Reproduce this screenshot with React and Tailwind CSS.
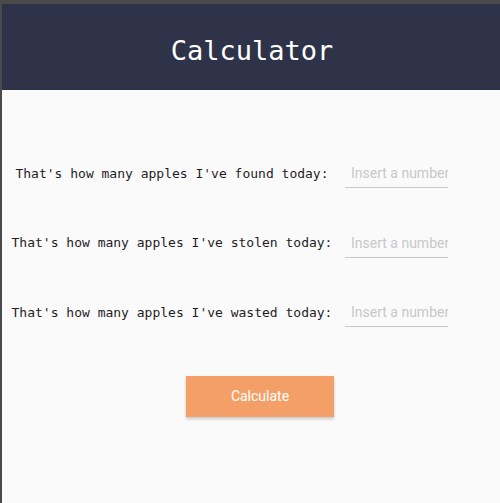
import React, { useState } from 'react';

const rows = [
  "That's how many apples I've found today:",
  "That's how many apples I've stolen today:",
  "That's how many apples I've wasted today:",
];

const App = () => {
  const [values, setValues] = useState(['', '', '']);

  const handleChange = (i, v) => {
    const next = [...values];
    next[i] = v;
    setValues(next);
  };

  return (
    <div className="w-[500px] h-[503px] bg-[#4a4a4a] pt-[4px] overflow-hidden">
      <div className="h-full border-l-[2px] border-[#4a4a4a] bg-[#fafafa] flex flex-col">
        {/* Header */}
        <header className="h-[86px] bg-[#2f3349] flex items-center justify-center">
          <h1 className="text-[27px] text-white font-['DejaVu_Sans_Mono',monospace] pl-[2px] pt-[8px]">
            Calculator
          </h1>
        </header>

        {/* Form */}
        <div className="pt-[69px] pl-[6px] grid grid-cols-[328px_103px] gap-x-[9px] gap-y-[40.5px]">
          {rows.map((label, i) => (
            <React.Fragment key={i}>
              <label className="text-[13px] text-[#1e1e1e] text-center self-center font-['DejaVu_Sans_Mono',monospace]">
                {label}
              </label>
              <input
                type="number"
                value={values[i]}
                onChange={(e) => handleChange(i, e.target.value)}
                placeholder="Insert a number"
                className="h-[29px] w-[103px] bg-transparent border-b border-[#c9c9c9] pl-[6px] text-[14px] text-[#333] placeholder:text-[#c8c8c8] font-['Roboto',sans-serif] outline-none [appearance:textfield] [&::-webkit-inner-spin-button]:appearance-none"
              />
            </React.Fragment>
          ))}
        </div>

        <div className="pl-[184px] mt-[49px]">
          <button className="w-[148px] h-[41px] bg-[#f49f67] text-white text-[14px] font-['Roboto',sans-serif] shadow-[0_2px_3px_rgba(0,0,0,0.2)]">
            Calculate
          </button>
        </div>
      </div>
    </div>
  );
};

export default App;
